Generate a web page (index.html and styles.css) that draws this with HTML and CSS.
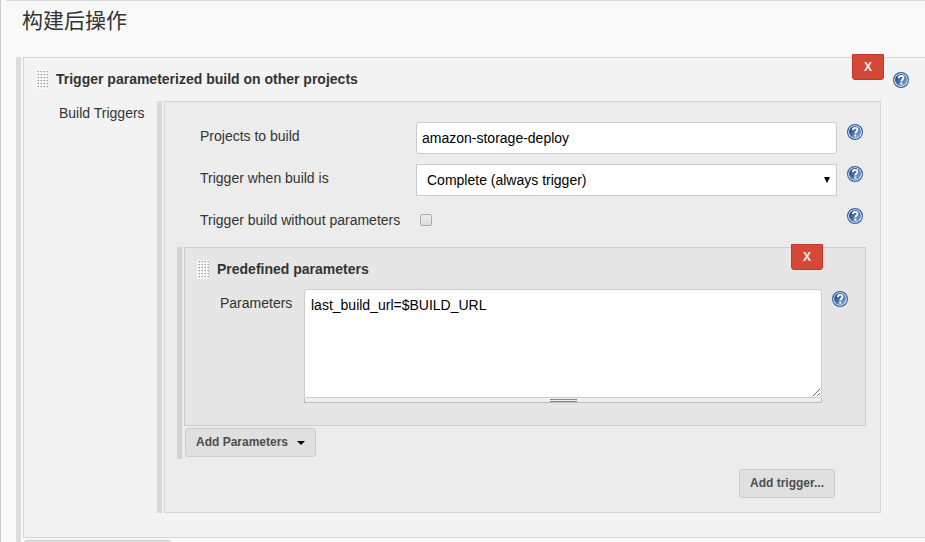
FILE: index.html
```html
<!DOCTYPE html>
<html lang="zh-CN">
<head>
<meta charset="utf-8">
<title>构建后操作</title>
<link rel="stylesheet" href="styles.css">
</head>
<body>
<svg class="defs" aria-hidden="true">
  <defs>
    <linearGradient id="blue" x1="0" y1="0" x2="1" y2="1">
      <stop offset="0.1" stop-color="#16407f"/>
      <stop offset="1" stop-color="#8fb2dc"/>
    </linearGradient>
    <pattern id="dots" width="3" height="3" patternUnits="userSpaceOnUse">
      <rect width="3" height="3" fill="#fafafa"/>
      <rect x="1" y="1" width="1" height="1" fill="#c4c4c4"/>
      <rect x="2" y="1" width="1" height="1" fill="#a0a0a0"/>
      <rect x="2" y="2" width="1" height="1" fill="#dadada"/>
    </pattern>
    <symbol id="help" viewBox="0 0 16 16">
      <circle cx="8" cy="8" r="7.4" fill="#fff" stroke="#315f9f" stroke-width="1.2"/>
      <circle cx="8" cy="8" r="6" fill="url(#blue)"/>
      <path d="M5.7 6.2C5.8 4.5 6.7 3.8 8.1 3.8c1.5 0 2.4.8 2.4 2 0 1.7-2.2 1.7-2.2 3.6" fill="none" stroke="#fff" stroke-width="1.8"/>
      <rect x="7.3" y="10.6" width="2" height="2" fill="#fff"/>
    </symbol>
    <symbol id="grip" viewBox="0 0 12 19">
      <rect width="12" height="19" fill="url(#dots)"/>
    </symbol>
  </defs>
</svg>
<main class="page">
  <h1 class="heading">构建后操作</h1>
  <div class="group">
    <section class="card card-outer">
      <button class="delete delete-outer" type="button">X</button>
      <header class="card-header">
        <svg class="handle"><use href="#grip"/></svg>
        <h2 class="title">Trigger parameterized build on other projects</h2>
        <a class="help help-outer" href="#" aria-label="Help"><svg><use href="#help"/></svg></a>
      </header>
      <div class="triggers">
        <span class="triggers-label">Build Triggers</span>
        <div class="group group-middle">
          <section class="card card-middle">
            <div class="fields">
              <div class="field">
                <label for="projects">Projects to build</label>
                <input class="control" id="projects" type="text" value="amazon-storage-deploy">
                <a class="help" href="#" aria-label="Help"><svg><use href="#help"/></svg></a>
              </div>
              <div class="field">
                <label for="when">Trigger when build is</label>
                <div class="select-wrap">
                  <select class="control select" id="when"><option>Complete (always trigger)</option></select>
                  <svg class="select-arrow" viewBox="0 0 6 6"><path d="M0 0h6L3 6z"/></svg>
                </div>
                <a class="help" href="#" aria-label="Help"><svg><use href="#help"/></svg></a>
              </div>
              <div class="field">
                <label for="without">Trigger build without parameters</label>
                <input class="check" id="without" type="checkbox">
                <a class="help" href="#" aria-label="Help"><svg><use href="#help"/></svg></a>
              </div>
            </div>
            <div class="group group-inner">
              <section class="card card-inner">
                <button class="delete delete-inner" type="button">X</button>
                <header class="card-header card-header-inner">
                  <svg class="handle"><use href="#grip"/></svg>
                  <h2 class="title">Predefined parameters</h2>
                </header>
                <div class="parameters">
                  <label class="parameters-label" for="parameters">Parameters</label>
                  <div class="text-wrap">
                    <textarea class="control textarea" id="parameters">last_build_url=$BUILD_URL</textarea>
                    <div class="resizer"><span class="resizer-grip"></span></div>
                  </div>
                  <a class="help" href="#" aria-label="Help"><svg><use href="#help"/></svg></a>
                </div>
              </section>
              <button class="button add-parameters" type="button">Add Parameters<svg class="caret" viewBox="0 0 8 4"><path d="M0 0h8L4 4z"/></svg></button>
            </div>
            <div class="actions"><button class="button" type="button">Add trigger...</button></div>
          </section>
        </div>
      </div>
    </section>
    <button class="button add-step" type="button" aria-label="Add"></button>
  </div>
</main>
</body>
</html>
```
FILE: styles.css
```css
* { box-sizing: border-box; }

body {
  margin: 0;
  height: 100vh;
  overflow: hidden;
  background: #f9f9f9;
  color: #333;
  font: 14px/20px "Liberation Sans", Arial, "Noto Sans CJK SC", sans-serif;
}

.defs { position: absolute; width: 0; height: 0; }

.page {
  min-height: 100vh;
  padding-left: 15px;
  border-left: 1px solid #ccc;
}

.page::before {
  content: "";
  display: block;
  height: 1px;
  margin-left: -10px;
  background: #d9d9d9;
}

.heading {
  margin: 0;
  padding: 2px 0 22px 6px;
  font: 400 21px/32px "Noto Sans CJK SC", sans-serif;
}

.group { padding-left: 2px; border-left: 5px solid #ddd; }
.group-middle { border-color: #d9d9d9; }
.group-inner {
  margin: 9px 14px 0 12px;
  padding-bottom: 2px;
  border-color: #d3d3d3;
}

.card { position: relative; border: 1px solid #d6d6d6; }
.card-outer { border-right: 0; padding-bottom: 24px; background: #f3f3f3; }
.card-middle { padding: 20px 0 14px; background: #ececec; }
.card-inner { padding-bottom: 22px; border-color: #ccc; background: #e6e6e6; }

.card-header {
  display: flex;
  gap: 8px;
  height: 43px;
  padding: 12px 16px 0 12px;
}
.card-header-inner { height: 41px; }

.handle { flex: none; width: 12px; height: 19px; }
.title { margin: 0; font-size: 14px; line-height: 19px; }

.help { display: block; width: 16px; height: 16px; margin: 2px 0 0 10px; }
.help svg { display: block; width: 16px; height: 16px; }
.help-outer { margin-left: auto; }

.delete {
  position: absolute;
  top: -4px;
  width: 32px;
  height: 26px;
  padding: 0;
  border: 1px solid #c03a2b;
  border-radius: 0 0 3px 3px;
  background: #d34836;
  color: #eee;
  font: 700 12px/20px "Liberation Sans", Arial, sans-serif;
}
.delete-outer { right: 41px; }
.delete-inner { right: 42px; }

.triggers {
  display: grid;
  grid-template-columns: 133px 1fr;
  padding-right: 44px;
}
.triggers-label { padding: 2px 0 0 35px; }

.fields { display: grid; gap: 10px; padding-left: 35px; }
.field {
  display: grid;
  grid-template-columns: 216px 1fr 43px;
  min-height: 32px;
}
.field label { padding-top: 4px; }

.control {
  display: block;
  width: 100%;
  height: 32px;
  margin: 0;
  padding: 5px;
  border: 1px solid #ccc;
  border-radius: 3px;
  background: #fff;
  color: #000;
  font: 14px/20px "Liberation Sans", Arial, sans-serif;
}

.select-wrap { position: relative; }
.select { appearance: none; padding: 5px 10px; border-radius: 0; }
.select-arrow {
  position: absolute;
  right: 7px;
  top: 13px;
  width: 6px;
  height: 6px;
  pointer-events: none;
}

.check {
  appearance: none;
  width: 12px;
  height: 12px;
  margin: 8px 4px;
  border: 1px solid #aaa;
  border-radius: 2px;
  background: linear-gradient(#eee, #dcdcdc);
}

.parameters { display: grid; grid-template-columns: 119px 1fr 43px; }
.parameters-label { padding: 4px 0 0 35px; }
.textarea { height: 109px; padding: 5px 6px; resize: vertical; }
.resizer {
  display: flex;
  justify-content: center;
  height: 5px;
  padding-top: 1px;
  border: 1px solid #bbb;
  border-top: 0;
  background: #eee;
}
.resizer-grip {
  width: 27px;
  height: 3px;
  border: solid #888;
  border-width: 1px 0;
}

.button {
  display: flex;
  align-items: center;
  height: 29px;
  padding: 0 10px 2px;
  border: 1px solid #ccc;
  border-radius: 3px;
  background: #e0e0e0;
  color: #4d4d4d;
  font: 700 12px/20px "Liberation Sans", Arial, sans-serif;
}
.add-parameters { margin: 2px 0 0 1px; }
.add-step { width: 147px; margin: 2px 0 0 1px; }
.caret { width: 8px; height: 4px; margin: 3px 0 0 9px; fill: #000; }

.actions { display: flex; justify-content: flex-end; margin: 10px 45px 0 0; }
```
